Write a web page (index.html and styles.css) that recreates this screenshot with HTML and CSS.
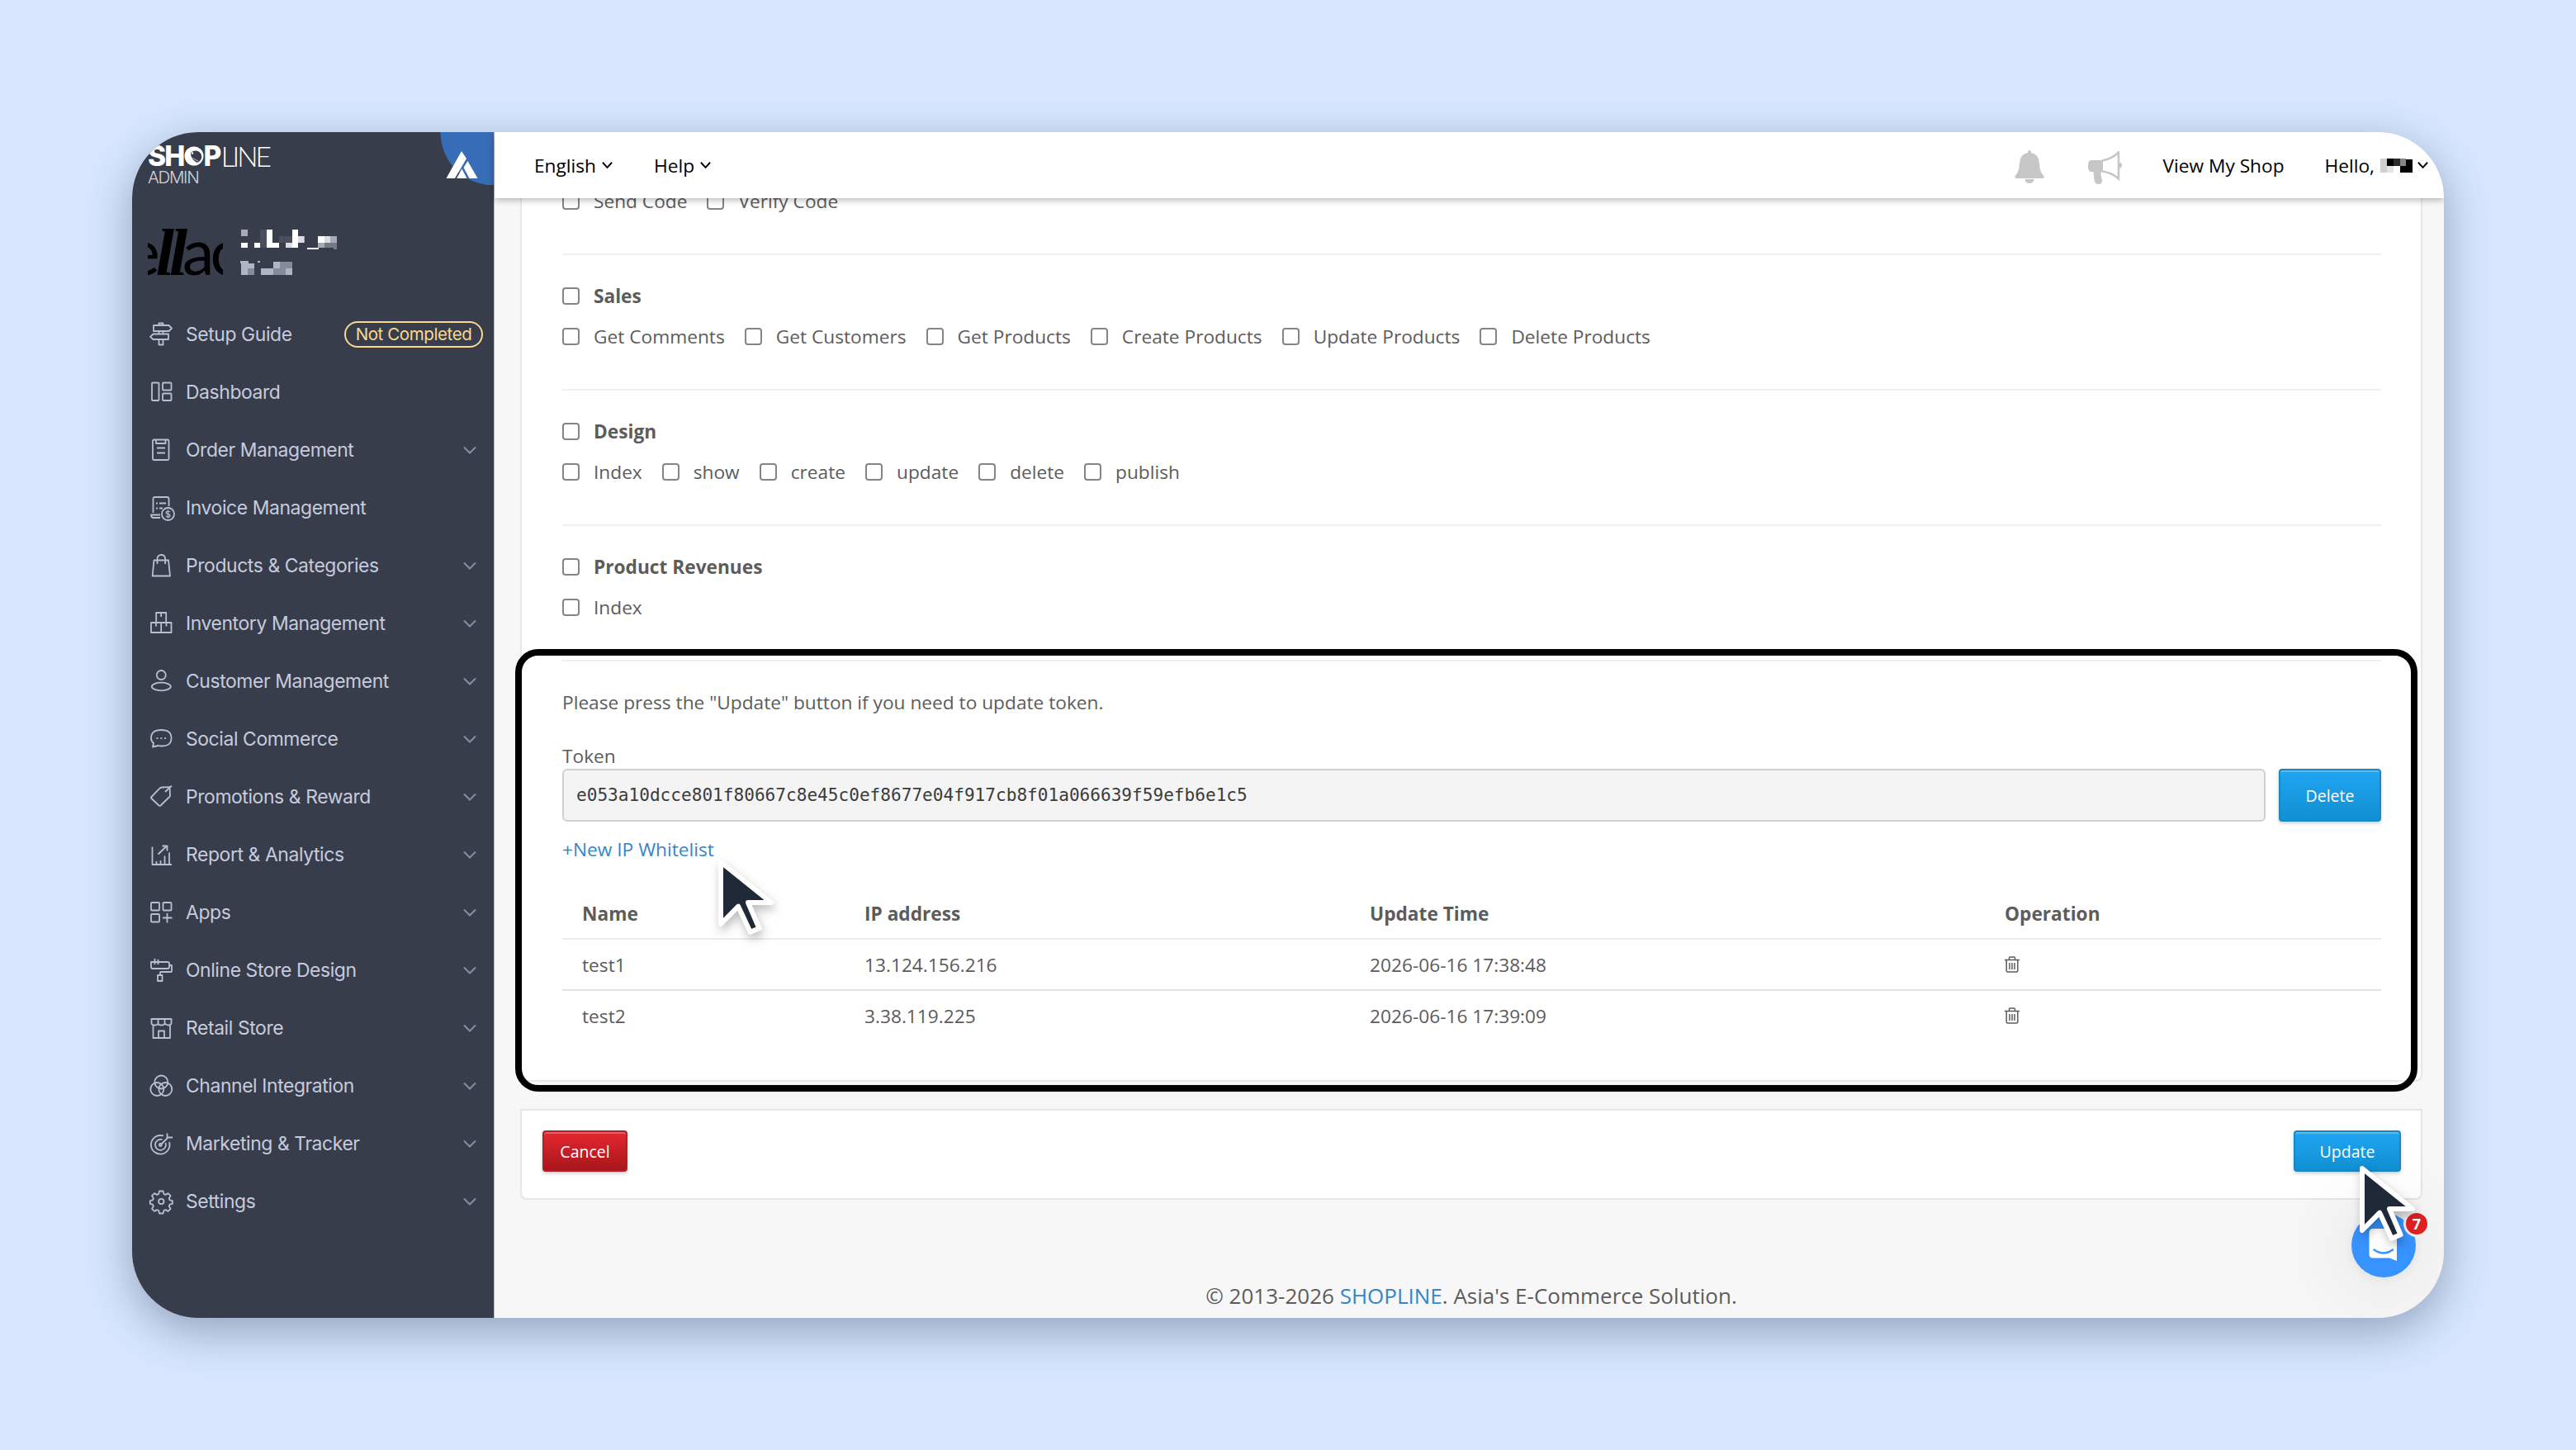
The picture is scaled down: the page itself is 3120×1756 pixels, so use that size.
FILE: index.html
```html
<!DOCTYPE html>
<html lang="en">
<head>
    <meta charset="UTF-8">
    <meta name="viewport" content="width=device-width, initial-scale=1.0">
    <title>SHOPLINE Admin</title>
    <link rel="stylesheet" href="styles.css">
</head>
<body>

<div class="window">
    <aside class="sidebar">
        <div class="brand">
            <div class="logo">
                <div class="logo-name"><b>SH</b><svg class="logo-o" viewBox="0 0 24 24"><circle cx="12" cy="12" r="11.5" fill="#fff"/><path d="M8 8c5-5 12-2 13 3s-2 8-6 9c-3-3-7-4-7-12z" fill="#383c4c"/><circle cx="10" cy="8.5" r="1.2" fill="#fff"/><path d="M9 14l8 4M9 16l6 4" stroke="#fff" stroke-width=".7"/></svg><b>P</b><span>LINE</span></div>
                <div class="logo-sub">ADMIN</div>
            </div>
            <svg class="corner" viewBox="0 0 66 64">
                <circle cx="66" cy="0" r="64.5" fill="#376cb6"/>
                <path d="M27 23l6 9-14 24H8.500zM34.500 35l12 21h-10l-7-13zM27.500 44.500l6 11.500H21z" fill="#fff"/>
            </svg>
        </div>

        <div class="shop">
            <div class="avatar">e<i>ll</i>ac</div>
            <svg class="masked" viewBox="0 0 118 60">
                <path fill="#fff" d="M1 16h8v6H1zM17 16h8v6h-8zM32 0h7v16h8v6H32zM63 0h7v16h-7zM55 16h15v6H55zM94 8h8v8h-8zM81 22h14v2H81z"/>
                <path fill="#a8abb4" d="M1 0h8v8H1zM94 16h8v6h-8zM109 8h8v8h-8zM70 8h8v8h-8z"/>
                <path fill="#dcdde2" d="M102 8h7v8h-7zM70 8h7v8h-7zM55 16h8v6h-8z"/>
                <path fill="#747985" d="M102 16h15v8h-4v-2h-11z"/>
                <path fill="#4a4f5e" d="M24 0h8v22h-8zM47 8h16v8H47z"/>
                <path fill="#b0b5c6" d="M0 38h10v3H0zM21 38h3v2h-3zM1 41h8v14H1zM9 41h8v6H9zM25 47h15v8H25zM40 39h8v8h-8zM55 47h8v8h-8z"/>
                <path fill="#858b9a" d="M9 47h8v8H9zM40 47h15v8H40zM48 39h15v8H48z"/>
            </svg>
        </div>

        <nav class="menu">
            <a class="menu-item">
                <svg class="icon" viewBox="0 0 28 28"><path d="M5 3h18.500l3.500 3.500-3.500 3.500H5zM23 13.500v6.500H4.500L1 16.800l3.500-3.300zM11.500 3V.5h5V3M11.500 10v3.500M16.500 10v3.500M11.500 20v6.500h5V20"/></svg>
                <span>Setup Guide</span>
                <em class="tag">Not Completed</em>
            </a>
            <a class="menu-item">
                <svg class="icon" viewBox="0 0 28 28"><rect x="3" y="2.500" width="8.500" height="21.500" rx="1"/><rect x="16" y="2.500" width="10.500" height="9" rx="1"/><rect x="16" y="15.500" width="10.500" height="8.500" rx="1"/></svg>
                <span>Dashboard</span>
            </a>
            <a class="menu-item">
                <svg class="icon" viewBox="0 0 28 28"><rect x="4" y="1.500" width="19.500" height="24.500" rx="1.500"/><path d="M8 1.500v4.500h11.500V1.500M9 11.500h10M9 17.500h10"/></svg>
                <span>Order Management</span>
                <svg class="arrow" viewBox="0 0 16 10"><path d="M1 1.500l7 7 7-7"/></svg>
            </a>
            <a class="menu-item">
                <svg class="icon" viewBox="0 0 28 28"><path d="M4.500 20V3q0-2 2-2h15q2 0 2 2v9M13 26H5q-3 0-3-3.500h11M8 8.500h2M12 8.500h8M8 14.500h2M12 14.500h4"/><circle cx="22.500" cy="21.500" r="7.500"/><path class="thin" d="M25 19.300q-.5-1.300-2.500-1.300-2.300 0-2.300 1.800 0 1.500 2.400 1.800 2.400.3 2.400 1.800 0 1.800-2.500 1.800-2.200 0-2.600-1.500M22.500 16.500v10"/></svg>
                <span>Invoice Management</span>
            </a>
            <a class="menu-item">
                <svg class="icon" viewBox="0 0 28 28"><path d="M5.500 7.500h17.500l2 19H3.700zM9.500 12V6q0-5 4.800-5t4.800 5v6"/></svg>
                <span>Products &amp; Categories</span>
                <svg class="arrow" viewBox="0 0 16 10"><path d="M1 1.500l7 7 7-7"/></svg>
            </a>
            <a class="menu-item">
                <svg class="icon" viewBox="0 0 28 28"><path d="M8.200 13V1h12v12M2 13h24.500v12H2zM14.200 13v12M14.200 1v5M8 13v4.500M20.500 13v4.500"/></svg>
                <span>Inventory Management</span>
                <svg class="arrow" viewBox="0 0 16 10"><path d="M1 1.500l7 7 7-7"/></svg>
            </a>
            <a class="menu-item">
                <svg class="icon" viewBox="0 0 28 28"><circle cx="14.300" cy="6.500" r="5.500"/><ellipse cx="14.300" cy="20.500" rx="11.500" ry="4.800"/></svg>
                <span>Customer Management</span>
                <svg class="arrow" viewBox="0 0 16 10"><path d="M1 1.500l7 7 7-7"/></svg>
            </a>
            <a class="menu-item">
                <svg class="icon" viewBox="0 0 28 28"><path d="M4 23.500l1-4.500Q2 16.500 2 13 2 3 14.300 3t12.200 10-12.200 9.500q-2 0-3.800-.5zM8.500 13.200h2M13.300 13.200h2M18 13.200h2"/></svg>
                <span>Social Commerce</span>
                <svg class="arrow" viewBox="0 0 16 10"><path d="M1 1.500l7 7 7-7"/></svg>
            </a>
            <a class="menu-item">
                <svg class="icon" viewBox="0 0 28 28"><path d="M2 14.500L13 3.200q.8-.7 2-.7l9.500-.3.500 10q0 1-.7 1.800L13.500 24.500q-1 .8-2 0L2 15.500zM19 8l8-7.500"/></svg>
                <span>Promotions &amp; Reward</span>
                <svg class="arrow" viewBox="0 0 16 10"><path d="M1 1.500l7 7 7-7"/></svg>
            </a>
            <a class="menu-item">
                <svg class="icon" viewBox="0 0 28 28"><path d="M3.500 4.500v21.500h23.500M8.500 26v-4M13.500 26v-5M18.500 26V15.500M24 26V11.500M10.500 13.500L20.500 4M15.500 3.500h6v6"/></svg>
                <span>Report &amp; Analytics</span>
                <svg class="arrow" viewBox="0 0 16 10"><path d="M1 1.500l7 7 7-7"/></svg>
            </a>
            <a class="menu-item">
                <svg class="icon" viewBox="0 0 28 28"><rect x="2" y="2" width="10" height="9.500" rx="1"/><rect x="16.500" y="2" width="10" height="9.500" rx="1"/><rect x="2" y="16" width="10" height="9.500" rx="1"/><path d="M16 20.500h11.500M21.500 15v11.500"/></svg>
                <span>Apps</span>
                <svg class="arrow" viewBox="0 0 16 10"><path d="M1 1.500l7 7 7-7"/></svg>
            </a>
            <a class="menu-item">
                <svg class="icon" viewBox="0 0 28 28"><path d="M2 4h20q2 0 2 2v4q0 2-2 2H4q-2 0-2-2zM6.500 0v7M10.500 1v6M24 8h3v7q0 1-1 1H14q-1 0-1 1v3M10 20h5.500v7H10z"/></svg>
                <span>Online Store Design</span>
                <svg class="arrow" viewBox="0 0 16 10"><path d="M1 1.500l7 7 7-7"/></svg>
            </a>
            <a class="menu-item">
                <svg class="icon" viewBox="0 0 28 28"><path d="M2.500 3h24v5q0 2.500-3.500 2.500T18.500 8q0 2.500-4 2.500t-4-2.500q0 2.500-4 2.500t-4-2.500zM10.500 3v5M18.500 3v5M4.500 10.500V26h20.500V10.500M11 26v-8.500h7V26"/></svg>
                <span>Retail Store</span>
                <svg class="arrow" viewBox="0 0 16 10"><path d="M1 1.500l7 7 7-7"/></svg>
            </a>
            <a class="menu-item">
                <svg class="icon" viewBox="0 0 28 28"><circle cx="14.300" cy="9.500" r="8"/><circle cx="9.300" cy="18" r="8"/><circle cx="19.300" cy="18" r="8"/></svg>
                <span>Channel Integration</span>
                <svg class="arrow" viewBox="0 0 16 10"><path d="M1 1.500l7 7 7-7"/></svg>
            </a>
            <a class="menu-item">
                <svg class="icon" viewBox="0 0 28 28"><path d="M17 4.500q-1.500-.5-3.500-.5A11.300 11.300 0 1 0 24 12M15.500 9.200A6.500 6.500 0 1 0 19.500 13M13.500 15.500L21.500 7.500V1.500M21.500 6.500h6.500"/><circle cx="13.300" cy="15.500" r="1.500"/></svg>
                <span>Marketing &amp; Tracker</span>
                <svg class="arrow" viewBox="0 0 16 10"><path d="M1 1.500l7 7 7-7"/></svg>
            </a>
            <a class="menu-item">
                <svg class="icon" viewBox="0 0 28 28"><circle cx="14.300" cy="14" r="3.200"/><path d="M12 1.500h4.600l.8 3.500 2 .9 3.200-1.800 3 3-1.900 3.100.9 2.100 3.200.8v3.800l-3.200.8-.9 2.100 1.900 3.100-3 3-3.200-1.800-2 .9-.8 3.500H12l-.8-3.500-2-.9L6 25.900l-3-3 1.900-3.100-.9-2.100-3.200-.8v-3.800l3.200-.8.9-2.100L3 7.100l3-3 3.200 1.800 2-.9z"/></svg>
                <span>Settings</span>
                <svg class="arrow" viewBox="0 0 16 10"><path d="M1 1.500l7 7 7-7"/></svg>
            </a>
        </nav>
    </aside>

    <div class="main">
        <header class="topbar">
            <a class="top-link">English <svg class="caret" viewBox="0 0 14 10"><path d="M1 1.500l6 6.500 6-6.500"/></svg></a>
            <a class="top-link">Help <svg class="caret" viewBox="0 0 14 10"><path d="M1 1.500l6 6.500 6-6.500"/></svg></a>
            <div class="top-right">
                <svg class="bell" viewBox="0 0 36 40"><path d="M18 0q2 0 2 3 9.500 1.500 10 13 .3 10 5.500 15.500.5 2.500-1.500 2.500H2q-2 0-1.500-2.500Q5.700 26 6 16 6.500 4.500 16 3q0-3 2-3zM12.500 35h11q-.5 5-5.500 5t-5.500-5z"/></svg>
                <svg class="horn" viewBox="0 0 42 41"><path d="M3 11h15v14h-2q-1 3 .5 8 1 1 .5 3.500-.5 3.500-4 3.500-5 0-5.500-5L6.500 25H3q-3-1-3-7t3-7z"/><path class="horn-line" d="M17 11.500q12-2 20-10v32q-8-7.500-20-9M38.500 14.500q2.500 2.500 0 5.500"/></svg>
                <a>View My Shop</a>
                <a class="hello">Hello,
                    <svg class="masked-name" viewBox="0 0 39 18"><path fill="#cfcfcf" d="M0 1h8v17H0z"/><path fill="#e4e4e4" d="M8 10h8v8H8z"/><path d="M8 1h8v9H8zM24 10h7V2h8v16H24z"/><path fill="#2b2b2b" d="M16 1h8v9h-8z"/><path fill="#858585" d="M24 1h7v9h-7z"/></svg>
                    <svg class="caret" viewBox="0 0 14 10"><path d="M1 1.500l6 6.500 6-6.500"/></svg>
                </a>
            </div>
        </header>

        <div class="content">
            <div class="card">
                <section class="group">
                    <div class="checks">
                        <label><input type="checkbox">Send Code</label>
                        <label><input type="checkbox">Verify Code</label>
                    </div>
                </section>
                <section class="group">
                    <div class="checks title"><label><input type="checkbox">Sales</label></div>
                    <div class="checks">
                        <label><input type="checkbox">Get Comments</label>
                        <label><input type="checkbox">Get Customers</label>
                        <label><input type="checkbox">Get Products</label>
                        <label><input type="checkbox">Create Products</label>
                        <label><input type="checkbox">Update Products</label>
                        <label><input type="checkbox">Delete Products</label>
                    </div>
                </section>
                <section class="group">
                    <div class="checks title"><label><input type="checkbox">Design</label></div>
                    <div class="checks">
                        <label><input type="checkbox">Index</label>
                        <label><input type="checkbox">show</label>
                        <label><input type="checkbox">create</label>
                        <label><input type="checkbox">update</label>
                        <label><input type="checkbox">delete</label>
                        <label><input type="checkbox">publish</label>
                    </div>
                </section>
                <section class="group">
                    <div class="checks title"><label><input type="checkbox">Product Revenues</label></div>
                    <div class="checks">
                        <label><input type="checkbox">Index</label>
                    </div>
                </section>

                <section class="token">
                    <p class="hint">Please press the "Update" button if you need to update token.</p>
                    <div class="token-label">Token</div>
                    <div class="token-row">
                        <div class="token-value">e053a10dcce801f80667c8e45c0ef8677e04f917cb8f01a066639f59efb6e1c5</div>
                        <button class="btn btn-delete">Delete</button>
                    </div>
                    <a class="new-ip">+New IP Whitelist</a>
                    <table class="ip-table">
                        <colgroup><col class="col-name"><col class="col-ip"><col class="col-time"><col></colgroup>
                        <thead>
                            <tr><th>Name</th><th>IP address</th><th>Update Time</th><th>Operation</th></tr>
                        </thead>
                        <tbody>
                            <tr>
                                <td>test1</td><td>13.124.156.216</td><td>2026-06-16 17:38:48</td>
                                <td><svg class="trash" viewBox="0 0 18 20"><path d="M0 4.500h18M5.500 4V2q0-1 1-1h5q1 0 1 1v2M2.200 4.500v13q0 1.500 1.500 1.500h10.600q1.500 0 1.500-1.500v-13M6 8v8M9 8v8M12 8v8"/></svg></td>
                            </tr>
                            <tr>
                                <td>test2</td><td>3.38.119.225</td><td>2026-06-16 17:39:09</td>
                                <td><svg class="trash" viewBox="0 0 18 20"><path d="M0 4.500h18M5.500 4V2q0-1 1-1h5q1 0 1 1v2M2.200 4.500v13q0 1.500 1.500 1.500h10.600q1.500 0 1.500-1.500v-13M6 8v8M9 8v8M12 8v8"/></svg></td>
                            </tr>
                        </tbody>
                    </table>
                </section>
            </div>

            <div class="actions">
                <button class="btn btn-cancel">Cancel</button>
                <button class="btn btn-update">Update</button>
            </div>

            <footer>© 2013-2026 <a>SHOPLINE</a>. Asia's E-Commerce Solution.</footer>
        </div>
    </div>

    <!-- support chat launcher -->
    <div class="chat">
        <svg viewBox="0 0 78 78"><path d="M26 19h24q5 0 5 5v34l-9-3.500H26q-4.500 0-4.500-4.500V24q0-5 4.500-5z" fill="#fff"/><path d="M27.500 44.500q11 8 22.500 0" fill="none" stroke="#3793ff" stroke-width="2.500" stroke-linecap="round"/></svg>
        <span class="chat-count">7</span>
    </div>

    <div class="highlight"></div>
    <svg class="cursor cursor-link" viewBox="0 0 70 92"><path d="M4 5l61 49H37l13.500 31.300-10.800 4.400-14.500-31L4 80z"/></svg>
    <svg class="cursor cursor-update" viewBox="0 0 70 92"><path d="M4 5l61 49H37l13.500 31.300-10.800 4.400-14.500-31L4 80z"/></svg>
</div>

</body>
</html>
```
FILE: styles.css
```css
* {
    margin: 0;
    padding: 0;
    box-sizing: border-box;
}

body {
    background: #d8e7ff;
    padding: 160px;
    height: 1756px;
    font-family: "Open Sans", sans-serif;
    font-size: 22.7px;
    color: #5c5c5c;
}

.window {
    position: relative;
    display: flex;
    width: 2800px;
    height: 1436px;
    border-radius: 80px;
    overflow: hidden;
    background: #f7f7f7;
    box-shadow: 0 16px 56px rgba(30, 50, 80, 0.38);
}

/* sidebar */
.sidebar {
    width: 438px;
    flex-shrink: 0;
    background: #383d4c;
    color: #c6cbdd;
    font-family: Inter, sans-serif;
}

.brand {
    display: flex;
    justify-content: space-between;
    height: 116px;
    padding-left: 19px;
}

.logo {
    padding-top: 15px;
    color: white;
}

.logo-name {
    display: flex;
    align-items: center;
    height: 28px;
    font-size: 33.500px;
    line-height: 28px;
}

.logo-name b {
    font-weight: 800;
    letter-spacing: -1.8px;
}

.logo-name span {
    margin-left: 1px;
    font-family: Lato, sans-serif;
    font-size: 33.500px;
    font-weight: 300;
    letter-spacing: -3px;
}

.logo-o {
    width: 24px;
    height: 24px;
}

.logo-sub {
    margin-top: 3px;
    font-size: 20.500px;
    line-height: 17px;
    font-weight: 300;
    letter-spacing: -1.3px;
    color: #d5d6da;
}

.corner {
    width: 66px;
    height: 64px;
}

.shop {
    display: flex;
    gap: 21px;
    height: 94px;
    padding-left: 19px;
}

.avatar {
    width: 91px;
    height: 60px;
    overflow: hidden;
    color: black;
    font-family: Lato, sans-serif;
    font-size: 77px;
    line-height: 54px;
    letter-spacing: -5px;
    text-indent: -26px;
    white-space: nowrap;
}

.avatar i {
    font-family: "Liberation Serif", serif;
    font-size: 80px;
    font-weight: bold;
    line-height: 40px;
    letter-spacing: -6px;
}

.masked {
    width: 118px;
    height: 60px;
    margin-top: 2px;
}

.menu-item {
    display: flex;
    align-items: center;
    height: 70px;
    padding: 0 21px;
    font-size: 22.9px;
    letter-spacing: -0.4px;
}

.menu-item span {
    flex: 1;
    margin-left: 16px;
    white-space: nowrap;
}

.icon {
    width: 28px;
    height: 28px;
    flex-shrink: 0;
    overflow: visible;
    fill: none;
    stroke: #b9bfd0;
    stroke-width: 1.8;
    stroke-linejoin: round;
}

.icon .thin {
    stroke-width: 1.2;
}

.arrow {
    width: 16px;
    height: 10px;
    fill: none;
    stroke: #8190a5;
    stroke-width: 2;
}

.tag {
    width: 168px;
    height: 32px;
    margin-right: -8px;
    border: 2px solid #fad98f;
    border-radius: 16px;
    color: #fad98f;
    font-size: 20.500px;
    font-style: normal;
    line-height: 28px;
    text-align: center;
    white-space: nowrap;
}

/* top bar */
.main {
    flex: 1;
    display: flex;
    flex-direction: column;
    min-width: 0;
    border-left: 1px solid #b9b9bd;
}

.topbar {
    position: relative;
    z-index: 1;
    display: flex;
    align-items: center;
    gap: 50px;
    height: 80px;
    padding: 0 19px 0 48px;
    background: white;
    color: black;
    box-shadow: 0 2px 8px rgba(0, 0, 0, 0.3);
}

.top-link {
    display: flex;
    align-items: center;
    gap: 7px;
}

.caret {
    width: 13px;
    height: 10px;
    fill: none;
    stroke: black;
    stroke-width: 2;
}

.top-right {
    display: flex;
    align-items: center;
    margin-left: auto;
}

.bell {
    width: 36px;
    height: 40px;
    margin-right: 53px;
    margin-top: 4px;
    fill: #c6c6c6;
}

.horn {
    width: 42px;
    height: 41px;
    margin-right: 49px;
    margin-top: 6px;
    fill: #c6c6c6;
}

.horn-line {
    fill: none;
    stroke: #c6c6c6;
    stroke-width: 2.500;
}

.hello {
    display: flex;
    align-items: center;
    margin-left: 49px;
}

.masked-name {
    width: 39px;
    height: 18px;
    margin: 0 6px 0 7px;
}

/* content */
.content {
    flex: 1;
    overflow: hidden;
    padding: 0 26px 0 31px;
}

.card {
    height: 1091px;
    margin-top: -21px;
    padding: 0 48px 0 49px;
    background: white;
    border: 2px solid #e8e8e8;
    border-top: none;
    border-radius: 0 0 8px 8px;
}

.group {
    padding: 25px 0 39px;
    border-bottom: 2px solid #f0f0f0;
}

.group:first-child {
    padding-top: 0;
}

.checks {
    display: flex;
    align-items: center;
    gap: 24px;
    height: 49px;
}

.checks label {
    display: flex;
    align-items: center;
}

.checks input {
    appearance: none;
    width: 21px;
    height: 21px;
    margin-right: 17px;
    border: 2px solid #858585;
    border-radius: 4px;
    background: white;
}

.title {
    font-weight: bold;
}

.token {
    padding-top: 35px;
}

.hint {
    line-height: 30px;
}

.token-label {
    margin-top: 34px;
    line-height: 31px;
}

.token-row {
    display: flex;
    gap: 16px;
    height: 64px;
}

.token-value {
    flex: 1;
    padding-left: 15px;
    border: 2px solid #d0d0d0;
    border-radius: 6px;
    background: #f4f4f4;
    color: #3c3c3c;
    font-family: "DejaVu Sans Mono", monospace;
    font-size: 21.1px;
    line-height: 60px;
}

.new-ip {
    display: block;
    margin-top: 19px;
    line-height: 30px;
    color: #3585c9;
}

.ip-table {
    width: 100%;
    margin-top: 32px;
    border-collapse: separate;
    border-spacing: 0;
    table-layout: fixed;
    text-align: left;
}

.col-name { width: 342px; }
.col-ip { width: 612px; }
.col-time { width: 769px; }

.ip-table th,
.ip-table td {
    height: 62px;
    padding-left: 24px;
    border-bottom: 2px solid #e2e2e2;
}

.ip-table tr:last-child td {
    border-bottom: none;
    padding-bottom: 2px;
}

.ip-table thead th {
    border-bottom-color: #ececec;
}

.trash {
    display: block;
    width: 18px;
    height: 20px;
    fill: none;
    stroke: #5c5c5c;
    stroke-width: 1.5;
}

.actions {
    display: flex;
    justify-content: space-between;
    height: 110px;
    margin-top: 33px;
    padding: 24px 24px 0 25px;
    background: white;
    border: 2px solid #e6e6e6;
    border-radius: 0 0 8px 8px;
}

.btn {
    height: 50px;
    border: 2px solid #1a86c4;
    border-radius: 4px;
    background: linear-gradient(#20a5f2, #1190d2);
    box-shadow: inset 0 2px 0 rgba(255, 255, 255, 0.25), 0 2px 4px rgba(0, 0, 0, 0.2);
    color: white;
    font-family: inherit;
    font-size: 19.500px;
}

.btn-delete {
    width: 124px;
    height: 64px;
}

.btn-update {
    width: 130px;
}

.btn-cancel {
    width: 103px;
    border-color: #b31f27;
    background: linear-gradient(#e5272f, #a9161d);
}

footer {
    margin-top: 97px;
    font-size: 26px;
    line-height: 38px;
    text-align: center;
}

footer a {
    color: #3585c9;
}

/* overlays */
.highlight {
    position: absolute;
    left: 464px;
    top: 626px;
    width: 2304px;
    height: 536px;
    border: 8px solid black;
    border-radius: 28px;
}

.chat {
    position: absolute;
    left: 2688px;
    top: 1309px;
    width: 78px;
    height: 78px;
    border-radius: 50%;
    background: #3793ff;
    box-shadow: 0 2px 12px rgba(0, 0, 0, 0.06), 0 4px 100px 20px rgba(0, 0, 0, 0.07);
}

.chat-count {
    position: absolute;
    right: -17px;
    top: -3px;
    width: 32px;
    height: 32px;
    border: 3px solid #f1f1f1;
    border-radius: 50%;
    background: #e02020;
    color: white;
    font-size: 18px;
    font-weight: bold;
    line-height: 26px;
    text-align: center;
}

.cursor {
    position: absolute;
    width: 70px;
    height: 92px;
    overflow: visible;
    fill: #202938;
    stroke: white;
    stroke-width: 6;
    stroke-linejoin: round;
    filter: drop-shadow(2px 6px 6px rgba(0, 0, 0, 0.25));
}

.cursor-link {
    left: 709px;
    top: 879px;
}

.cursor-update {
    left: 2697px;
    top: 1250px;
}
```
